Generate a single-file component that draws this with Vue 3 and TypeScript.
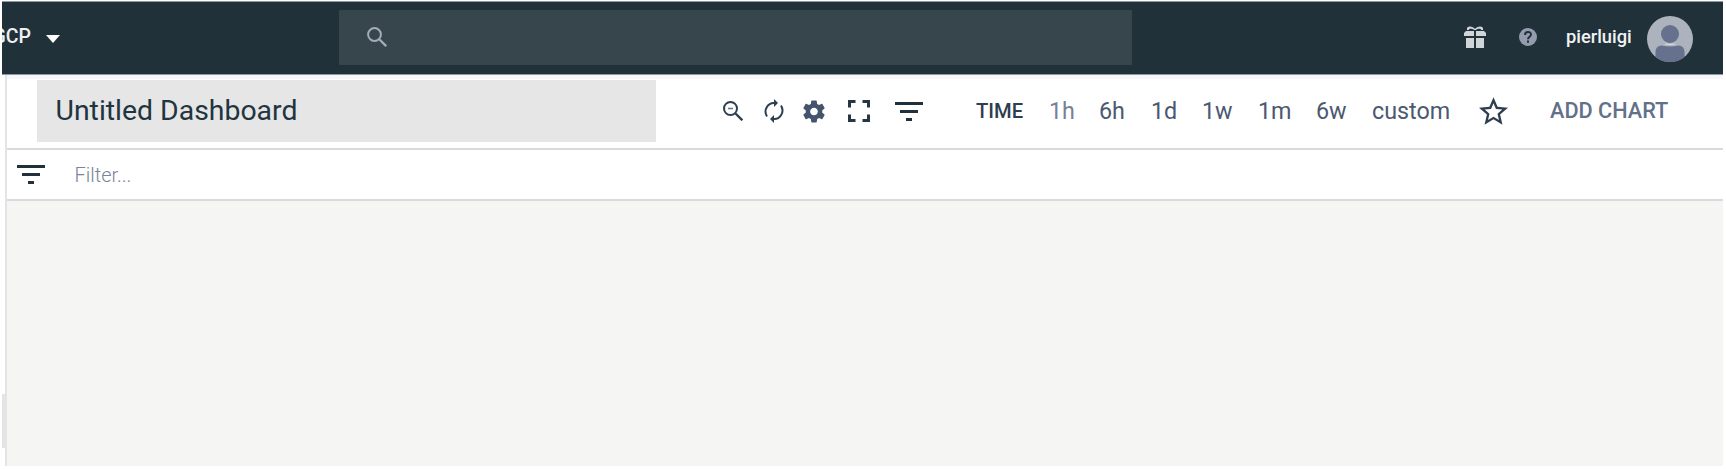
<script setup lang="ts">
const ranges: string[] = ['1h', '6h', '1d', '1w', '1m', '6w', 'custom']
</script>

<template>
  <div class="app">
    <header class="topbar">
      <div class="project"><span class="project-name">GCP</span></div>
      <svg class="caret" viewBox="0 0 14 8"><path d="M0 0h14L7 8z" fill="#fff" /></svg>
      <div class="search">
        <svg viewBox="0 0 20 20" fill="none" stroke="#a3acba" stroke-width="2"><circle cx="7.5" cy="7.5" r="6.4" /><path d="M12 12l7.2 7.2" stroke-width="2.3" /></svg>
      </div>
      <svg class="gift" viewBox="0 0 22 22" fill="#d0d5da">
        <path d="M2 5h8v5H0V7zM12 5h8l2 2v3H12zM2 12h8v10H2zM12 12h8v10h-8z" />
        <path d="M3 4c-1-5 6-4 8-1 2-3 9-4 8 1h-2c0-2-4-1-5 0h-2c-1-1-5-2-5 0z" />
      </svg>
      <svg class="help" viewBox="0 0 18 18"><circle cx="9" cy="9" r="9" fill="#929cad" /><path d="M6 7c0-4 6-4 6-.5 0 2.300-3 2.200-3 4.800M9 12.500v2.200" fill="none" stroke="#20313a" stroke-width="2" /></svg>
      <div class="user"><span>pierluigi</span></div>
      <svg class="avatar" viewBox="0 0 46 46">
        <circle cx="23" cy="23" r="23" fill="#adb3bd" />
        <circle cx="23" cy="18" r="9" fill="#65718d" />
        <path d="M8.500 41V36q0-6 6-6.500 8.500 2 17 0 6 .5 6 6.500v5A23 23 0 0 1 8.500 41z" fill="#65718d" />
        <path d="M18 28q5 1 10 0" fill="none" stroke="#dfe2e6" />
      </svg>
    </header>

    <main class="page">
      <section class="toolbar">
        <div class="title"><span>Untitled Dashboard</span></div>
        <svg class="i-zoom" viewBox="0 0 20 20" fill="none" stroke="#2d3e50" stroke-width="2"><circle cx="7.500" cy="7.500" r="6.500" /><path d="M12 12l7.300 7.300" stroke-width="2.300" /><path d="M5 7.500h5" stroke="#65718d" stroke-width="1.500" /></svg>
        <svg class="i-refresh" viewBox="0 0 20 24" fill="none" stroke="#2d3e50" stroke-width="2"><path d="M11 4C4 3 -1 11 3 17.500M9 20c7 1 12-7 8-13.500" /><path d="M10 0l4 4-4 4zM10 24l-4-4 4-4z" fill="#2d3e50" stroke="none" /></svg>
        <svg class="i-gear" viewBox="2 2 20 20"><path fill="#44546c" d="M19.430 12.980c.04-.32.07-.64.07-.98s-.03-.66-.07-.98l2.110-1.650c.19-.15.24-.42.12-.64l-2-3.460c-.12-.22-.39-.3-.61-.22l-2.490 1c-.52-.4-1.080-.73-1.690-.98l-.38-2.650C14.460 2.180 14.250 2 14 2h-4c-.25 0-.46.18-.49.42l-.38 2.650c-.61.25-1.170.59-1.690.98l-2.490-1c-.23-.09-.49 0-.61.22l-2 3.460c-.13.22-.07.49.12.64l2.110 1.650c-.04.32-.07.65-.07.98s.03.66.07.98l-2.110 1.650c-.19.15-.24.42-.12.64l2 3.460c.12.22.39.3.61.22l2.490-1c.52.4 1.080.73 1.690.98l.38 2.650c.03.24.24.42.49.42h4c.25 0 .46-.18.49-.42l.38-2.650c.61-.25 1.170-.59 1.690-.98l2.490 1c.23.09.49 0 .61-.22l2-3.460c.12-.22.07-.49-.12-.64l-2.110-1.650zM12 15.500c-1.930 0-3.500-1.570-3.500-3.500s1.570-3.500 3.500-3.500 3.500 1.570 3.500 3.500-1.570 3.500-3.500 3.500z" /></svg>
        <svg class="i-full" viewBox="0 0 22 22" fill="none" stroke="#253744" stroke-width="3"><path d="M1.500 7.500v-6h6M14.500 1.500h6v6M20.500 14.500v6h-6M7.500 20.500h-6v-6" /></svg>
        <svg class="i-filter" viewBox="0 0 28 19" fill="#20313d"><path d="M0 0h28v3H0zM5 8h18v3H5zM11 16h6v3h-6z" /></svg>
        <span class="time">TIME</span>
        <span v-for="r in ranges" :key="r" class="range" :class="{ light: r === '1h', custom: r === 'custom' }">{{ r }}</span>
        <svg class="i-star" viewBox="2 2 20 19"><path fill="#2d3e50" d="M22 9.240l-7.190-.62L12 2 9.190 8.630 2 9.240l5.460 4.730L5.820 21 12 17.270 18.180 21l-1.630-7.030L22 9.240zM12 15.400l-3.760 2.270 1-4.280-3.320-2.880 4.380-.38L12 6.100l1.710 4.040 4.380.38-3.320 2.880 1 4.280L12 15.400z" /></svg>
        <span class="add">ADD CHART</span>
      </section>
      <section class="filter">
        <svg class="i-filter" viewBox="0 0 28 19" fill="#20313d"><path d="M0 0h28v3H0zM5 8h18v3H5zM11 16h6v3h-6z" /></svg>
        <span>Filter...</span>
      </section>
      <section class="canvas"></section>
    </main>
    <div class="handle"></div>
  </div>
</template>

<style>
body { margin: 0; background: #fff; }
</style>

<style scoped>
.app {
  position: relative;
  box-sizing: border-box;
  width: 1726px;
  height: 469px;
  padding: 1px 3px 3px 2px;
  overflow: hidden;
  background: #fff;
  font-family: Roboto, "Liberation Sans", sans-serif;
  color: #2d3e50;
}
svg { display: block; flex: none; }
span { white-space: nowrap; }
.topbar {
  box-sizing: border-box;
  display: flex;
  align-items: center;
  height: 74px;
  padding-bottom: 2px;
  background: #21313a;
  border-top: 1px solid #8e9ba3;
  border-bottom: 1px solid #8e99a6;
}
.project {
  display: flex;
  justify-content: flex-end;
  width: 29px;
  margin-bottom: 1px;
  overflow: hidden;
  color: #eef0f2;
  font-size: 19.5px;
  font-weight: 500;
  line-height: 26px;
}
.caret { width: 14px; height: 8px; margin: 4px 0 0 15px; }
.search {
  display: flex;
  align-items: center;
  width: 793px;
  height: 55px;
  margin-left: 279px;
  border-radius: 1px;
  background: #37454c;
}
.search svg { width: 20px; height: 20px; margin: 0 0 1px 28px; }
.gift { width: 22px; height: 22px; margin-left: 332px; }
.help { width: 18px; height: 18px; margin-left: 33px; }
.user { width: 65px; margin-left: 29px; margin-bottom: 1px; color: #f0f2f4; font-size: 18.3px; font-weight: 500; }
.avatar { width: 46px; height: 46px; margin: 3px 0 0 16px; }

.page { box-sizing: border-box; height: 391px; margin-left: 3px; border-left: 2px solid #e4e4e4; }
.toolbar {
  box-sizing: border-box;
  display: grid;
  grid-template-columns: 686px 41px 39px 45px 47px 81px 73px 50px 52px 51px 56px 58px 56px 107px 71px 1fr;
  align-items: center;
  height: 75px;
  padding: 0 0 5px 30px;
  border-top: 4px solid #f7f7f7;
  border-bottom: 2px solid #dadada;
}
.title {
  box-sizing: border-box;
  width: 619px;
  height: 62px;
  padding-left: 18.500px;
  background: #e6e6e6;
  color: #22343f;
  font-size: 28.400px;
  line-height: 61px;
}
.i-zoom { width: 20px; height: 20px; }
.i-refresh { width: 20px; height: 24px; }
.i-gear { width: 22px; height: 23px; }
.i-full { width: 22px; height: 22px; }
.i-filter { width: 28px; height: 19px; }
.i-star { width: 29px; height: 28px; }
.time { font-size: 20.200px; font-weight: 500; }
.range { font-size: 23.300px; color: #4a5971; }
.light { color: #758198; }
.add { margin-bottom: 2px; color: #63708a; font-size: 21.700px; font-weight: 500; }
.filter {
  box-sizing: border-box;
  display: flex;
  align-items: center;
  height: 51px;
  padding-left: 10px;
  border-bottom: 2px solid #dadada;
}
.filter span { margin-left: 29.500px; color: #79859a; font-size: 20px; font-weight: 300; }
.canvas { height: 265px; background: #f5f5f4; }
.handle { position: absolute; left: 2px; top: 394px; width: 4px; height: 54px; background: #e4e4e4; }
</style>
